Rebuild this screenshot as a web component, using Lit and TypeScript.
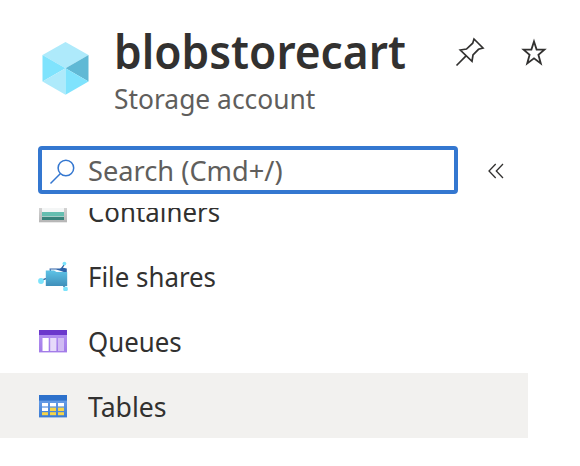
import { LitElement, html, css, svg } from "lit";
import { customElement } from "lit/decorators.js";
import { classMap } from "lit/directives/class-map.js";

const containersIcon = svg`
  <defs>
    <linearGradient id="steel" x1="0" y1="0" x2="0" y2="1">
      <stop offset="0" stop-color="#e6e6e6" /><stop offset="1" stop-color="#b5b5b5" />
    </linearGradient>
  </defs>
  <path d="M1 3H29V26.3H1Z" fill="url(#steel)" />
  <path d="M4 3H26V16H4Z" fill="#f4f6f6" />
  <rect x="4" y="16" width="22" height="4" fill="#65beb0" />
  <rect x="4" y="20" width="22" height="1" fill="#a5cdc7" />
  <rect x="4" y="21" width="22" height="3" fill="#37827a" />`;

const filesIcon = svg`
  <defs>
    <linearGradient id="folder" x1="0" y1="0" x2="0" y2="1">
      <stop offset="0" stop-color="#5ec3e6" /><stop offset="1" stop-color="#3f8fba" />
    </linearGradient>
  </defs>
  <path d="M3 19.3L8 17.6M22.5 9L26 4M24.5 23L27 27" stroke="#245c9c" stroke-width="1.3" fill="none" />
  <path d="M11.5 7.6L22 7.4L24 6.4L28.8 7.6V12H12Z" fill="#2d62a8" />
  <path d="M12.5 8.4H18L23 10L27 11.4H14Z" fill="#f3f8fc" />
  <path d="M7.8 9.5H16L18.5 11H29.2V25H7.8Z" fill="url(#folder)" />
  <circle cx="3" cy="20" r="2.9" fill="#7ce3fb" />
  <circle cx="26.4" cy="2.6" r="1.9" fill="#7ce3fb" />
  <circle cx="27.5" cy="28" r="2.4" fill="#7ce3fb" />`;

const queuesIcon = svg`
  <defs>
    <linearGradient id="violet" x1="0" y1="0" x2="0" y2="1">
      <stop offset="0" stop-color="#b18ff0" /><stop offset="1" stop-color="#a27be8" />
    </linearGradient>
  </defs>
  <rect x="1" y="8" width="28" height="18.4" fill="url(#violet)" />
  <rect x="1" y="4" width="28" height="5" fill="#6b38cc" />
  <rect x="4.5" y="12" width="6.2" height="13" fill="#ffffff" />
  <rect x="12.2" y="12" width="6.2" height="13" fill="#e6dafa" />
  <rect x="20" y="12" width="6" height="13" fill="#d0bbf3" />`;

const tablesIcon = svg`
  <defs>
    <linearGradient id="azure" x1="0" y1="0" x2="0" y2="1">
      <stop offset="0" stop-color="#6a9fe8" /><stop offset="1" stop-color="#3a7bd3" />
    </linearGradient>
  </defs>
  <rect x="1" y="8" width="28" height="18.4" fill="url(#azure)" />
  <rect x="1" y="4" width="28" height="5.6" fill="#2d71cb" />
  <g fill="#ffffff">
    <rect x="4" y="12" width="6" height="3.4" /><rect x="12" y="12" width="6" height="3.4" />
    <rect x="20" y="12" width="6" height="3.4" /><rect x="4" y="16.6" width="6" height="3.4" />
  </g>
  <g fill="#f5d44a">
    <rect x="12" y="16.6" width="6" height="3.4" /><rect x="20" y="16.6" width="6" height="3.4" />
    <rect x="4" y="21.2" width="6" height="3" /><rect x="12" y="21.2" width="6" height="3" />
    <rect x="20" y="21.2" width="6" height="3" />
  </g>`;

const items = [
  { label: "Containers", key: "containers", icon: containersIcon },
  { label: "File shares", key: "files", icon: filesIcon },
  { label: "Queues", key: "queues", icon: queuesIcon },
  { label: "Tables", key: "tables", icon: tablesIcon, selected: true },
];

@customElement("app-root")
export class AppRoot extends LitElement {
  static styles = css`
    :host {
      display: block;
      height: 466px;
      overflow: hidden;
      background: #fff;
      color: #323130;
      font-family: "Noto Sans", "Open Sans", sans-serif;
    }
    * { box-sizing: border-box; }
    svg { display: block; flex: none; }
    header { display: flex; height: 146px; padding-left: 38px; }
    .cube { margin: 38px 22px 0 0; }
    .titles { flex: none; width: 340px; padding-top: 20px; white-space: nowrap; }
    h1 { margin: 0; font-size: 47.5px; font-weight: 600; line-height: 62px; }
    h1 span { transform: scaleX(0.932); }
    .kind { font-size: 27px; line-height: 34px; color: #605e5c; }
    .kind span { transform: scaleX(0.977); }
    .action { margin-top: 36px; }
    .action + .action { margin-left: 32px; }
    .tools { display: flex; align-items: center; height: 48px; padding-left: 38px; }
    .search {
      display: flex; align-items: center;
      width: 420px; height: 48px; margin-right: 28px;
      border: 4px solid #3477d0; border-radius: 4px;
      padding-left: 6px;
      font-size: 27px; color: #605e5c; white-space: nowrap;
    }
    .search svg { margin-right: 10px; }
    .search span { transform: scaleX(1.008); }
    .list { margin-top: 14px; height: 258px; overflow: hidden; }
    .scrolled { margin-top: -30px; }
    .row {
      display: flex; align-items: center;
      width: 528px; height: 65px; padding-left: 38px; gap: 20px;
      font-size: 27px; white-space: nowrap;
    }
    .row span { padding-top: 2px; transform: scaleX(0.957); }
    .tables span { transform: scaleX(0.985); }
    .selected { background: #f2f1ef; }
    span { display: inline-block; transform-origin: 0 50%; }
  `;

  render() {
    return html`
      <header>
        <svg class="cube" width="54" height="60" viewBox="0 0 54 60">
          <path d="M27.5 4L50.5 17L27.5 30.3L4.5 17Z" fill="#aeeafb" />
          <path d="M4.5 17L27.5 30.3L4.5 43.5Z" fill="#7fe3fd" />
          <path d="M50.5 17V43.5L27.5 30.3Z" fill="#60b9d5" />
          <path d="M4.5 43.5L27.5 30.3V56.7Z" fill="#aeeafb" />
          <path d="M50.5 43.5L27.5 30.3V56.7Z" fill="#7fe3fd" />
        </svg>
        <div class="titles">
          <h1><span>blobstorecart</span></h1>
          <div class="kind"><span>Storage account</span></div>
        </div>
        <svg class="action" width="32" height="32" viewBox="0 0 32 32" fill="none" stroke="#323130" stroke-width="1.7">
          <path d="M2.5 29.5L11.8 20.2M20 3L29 12L24.5 13.3L19 19L18 25.3L6.3 14L12.5 13L18.7 7.2Z" />
        </svg>
        <svg class="action" width="32" height="32" viewBox="0 0 32 32" fill="none" stroke="#323130" stroke-width="1.8">
          <path d="M16 5.4L18.6 13.6H26.4L20.4 18.8L22.8 27.5L16 22.4L9.2 27.5L11.6 18.8L5.6 13.6H13.4Z" />
        </svg>
      </header>
      <div class="tools">
        <div class="search">
          <svg width="30" height="30" viewBox="0 0 30 30" fill="none" stroke="#3477d0" stroke-width="1.5">
            <circle cx="17.9" cy="13" r="7.8" /><path d="M12.2 18.8L2.5 28.5" />
          </svg>
          <span>Search (Cmd+/)</span>
        </div>
        <svg width="20" height="20" viewBox="0 0 20 20" fill="none" stroke="#323130" stroke-width="1.3">
          <path d="M9.7 4L3 11L9.7 18M17 4L10.3 11L17 18" />
        </svg>
      </div>
      <div class="list">
        <div class="scrolled">
          ${items.map(
            (i) => html`<div class=${classMap({ row: true, selected: !!i.selected, [i.key]: true })}>
              <svg width="30" height="30" viewBox="0 0 30 30">${i.icon}</svg><span>${i.label}</span>
            </div>`
          )}
        </div>
      </div>
    `;
  }
}
